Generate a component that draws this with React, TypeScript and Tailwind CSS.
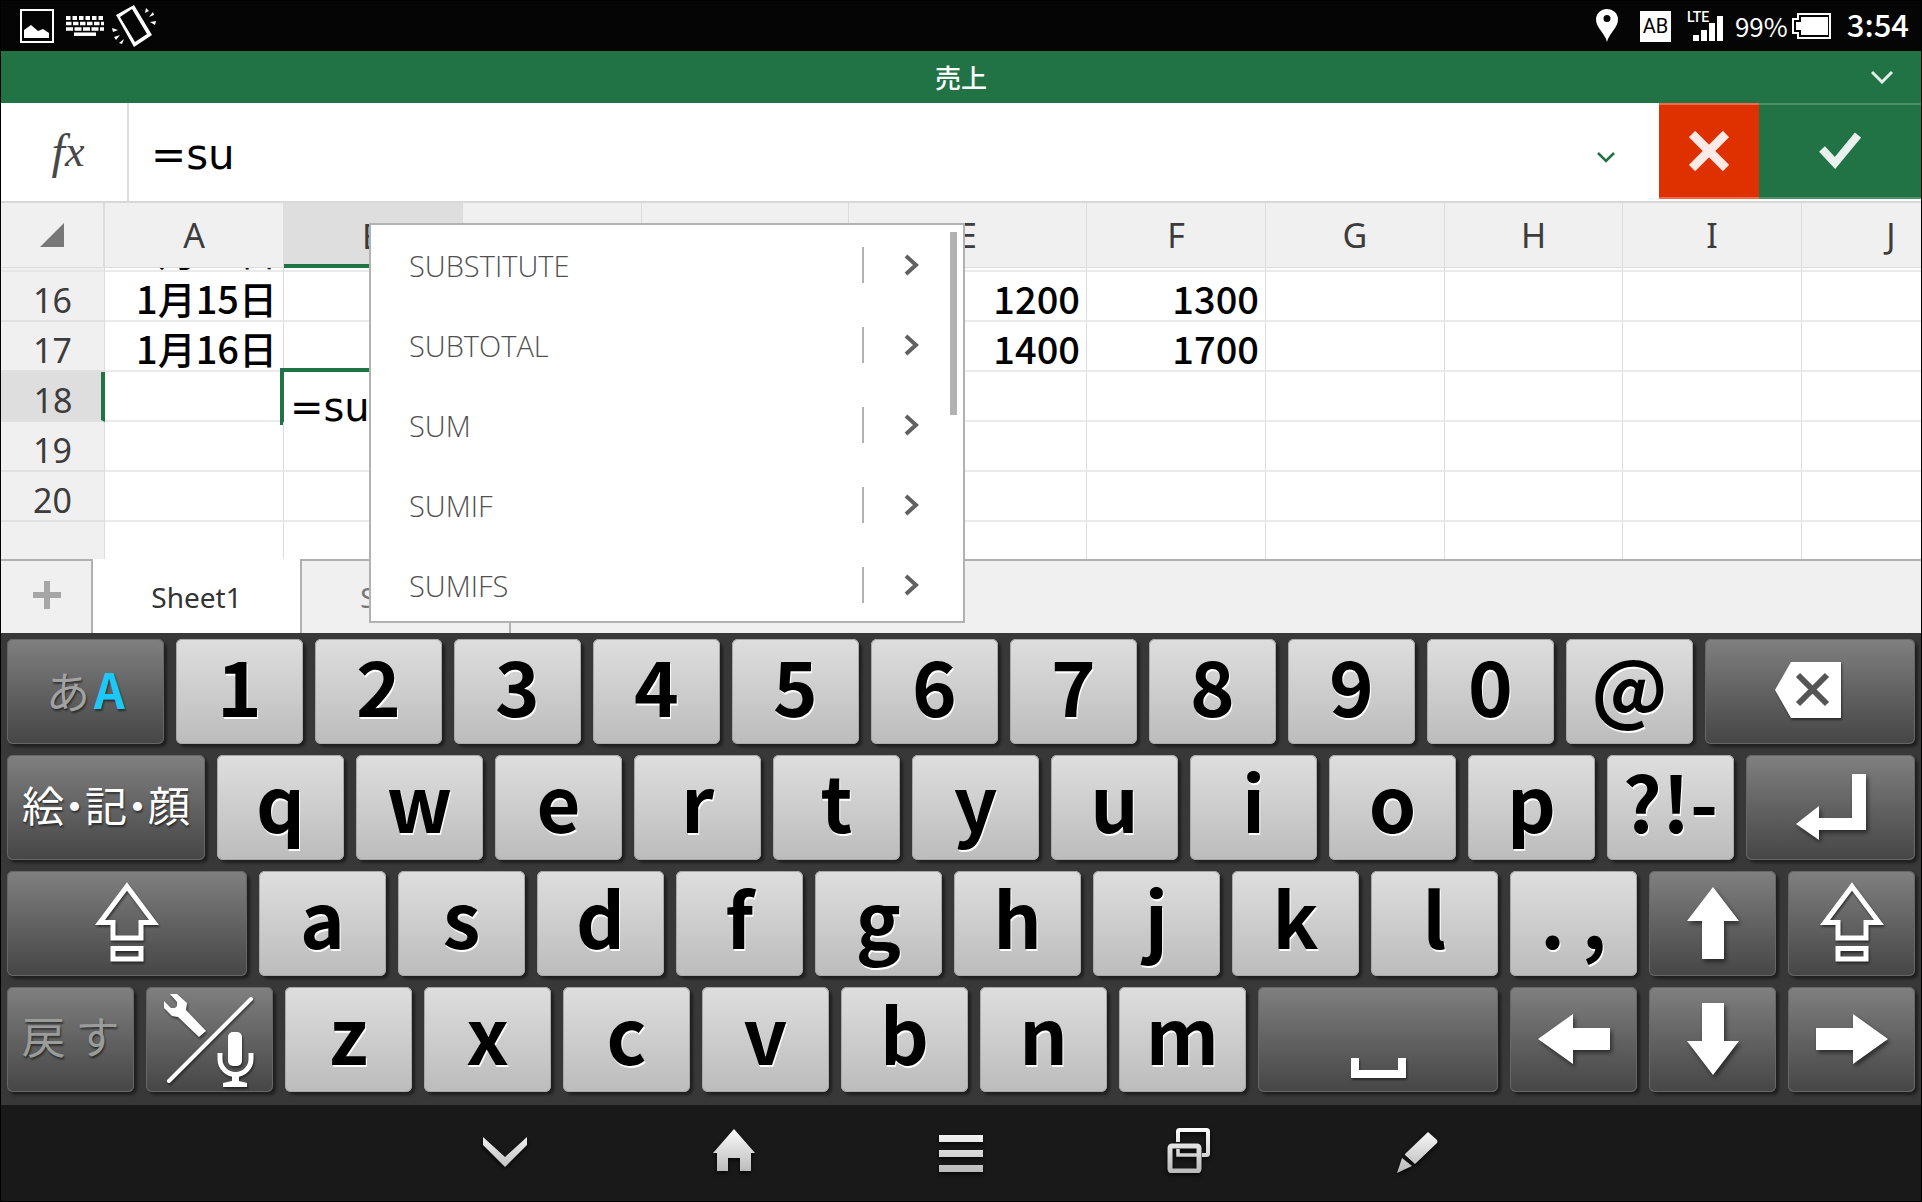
import type { ReactNode } from "react";

const columns = ["A", "B", "C", "D", "E", "F", "G", "H", "I", "J"];

const rows: { n: number; cells: Record<string, string> }[] = [
  { n: 16, cells: { A: "1月15日", E: "1200", F: "1300" } },
  { n: 17, cells: { A: "1月16日", E: "1400", F: "1700" } },
  { n: 18, cells: {} },
  { n: 19, cells: {} },
  { n: 20, cells: {} },
];

const suggestions = ["SUBSTITUTE", "SUBTOTAL", "SUM", "SUMIF", "SUMIFS"];

function StatusBar() {
  return (
    <header className="flex h-[50px] items-center justify-between bg-[#050505] pr-3 pl-[19px] font-['Noto_Sans_CJK_JP',sans-serif] text-white">
      <div className="flex items-center gap-2">
        <svg width="34" height="34" viewBox="0 0 34 34" className="mr-1">
          <rect x="1" y="1" width="32" height="32" fill="none" stroke="#fff" strokeWidth="2" />
          <path d="M4 29V21L11 16L18 22L23 20L29 24V29Z" fill="#fff" />
        </svg>
        <svg width="38" height="20" viewBox="0 0 38 20" fill="none" stroke="#fff">
          <path d="M0 2H38" strokeWidth="4" strokeDasharray="4.5 2" />
          <path d="M0 7.5H38" strokeWidth="3.5" strokeDasharray="5.5 1.5" />
          <path d="M0 13H38" strokeWidth="3.5" strokeDasharray="7 1.5" />
          <path d="M8 18.2H30" strokeWidth="3.5" />
        </svg>
        <svg width="44" height="42" viewBox="0 0 44 42" fill="#fff">
          <path fillRule="evenodd" d="M4 10L22 0L40 30L22 42ZM8 12L23 37L35 29L20 4Z" />
          <path d="M33 8L34 3L37 6ZM37 12L41 7L42 10ZM38 17L44 16L43 20ZM0 23L6 25L1 27ZM2 32L8 30L4 35ZM7 38L12 34L10 39Z" />
        </svg>
      </div>
      <div className="flex items-center">
        <svg width="22" height="34" viewBox="0 0 22 34" className="mr-[22px]">
          <path fillRule="evenodd" d="M11 33C9 24 0 19 0 10.500A11 10.500 0 0 1 22 10.500C22 19 13 24 11 33ZM11 6A3.500 3.500 0 1 0 11 13A3.500 3.500 0 1 0 11 6Z" fill="#fff" />
        </svg>
        <span className="mr-4 flex size-[31px] items-center justify-center bg-white font-['Roboto',sans-serif] text-xl text-black">AB</span>
        <span className="relative mr-3 block h-[30px] w-9">
          <span className="absolute top-0 left-0 font-['Roboto',sans-serif] text-sm leading-3 font-medium">LTE</span>
          <svg width="30" height="26" viewBox="0 0 30 26" fill="#fff" className="absolute right-0 bottom-0">
            <path d="M0 20H6V26H0ZM8 15H14V26H8ZM16 8H22V26H16ZM24 1H30V26H24Z" />
          </svg>
        </span>
        <span className="mr-1 text-[26px] leading-8">99%</span>
        <svg width="39" height="26" viewBox="0 0 39 26" className="mr-4">
          <path d="M6 1H38V25H6V20H1V6H6Z" fill="none" stroke="#fff" strokeWidth="2" />
          <path d="M9 4H36V22H9V17H4V9H9Z" fill="#fff" />
        </svg>
        <time className="pb-1 text-[31px] leading-8 font-medium">3:54</time>
      </div>
    </header>
  );
}

function TitleBar() {
  return (
    <div className="relative flex h-[52px] items-center justify-center bg-[#217346] text-white">
      <h1 className="font-['Noto_Sans_CJK_JP',sans-serif] text-[26px] leading-8 font-medium">売上</h1>
      <button type="button" aria-label="メニュー" className="absolute right-7 p-0">
        <svg width="22" height="14" viewBox="0 0 22 14" fill="none" stroke="#e6f0ea" strokeWidth="3">
          <path d="M1 2L11 12L21 2" />
        </svg>
      </button>
    </div>
  );
}

function FormulaBar() {
  return (
    <div className="flex h-[100px] border-b-2 border-[#d8d8d8] bg-white">
      <label htmlFor="formula" className="flex w-32 items-center justify-center border-r-2 border-[#dcdcdc] pl-2 font-['Liberation_Serif',serif] text-[44px] leading-none text-[#484848] italic">
        <span className="text-5xl leading-none">f</span>x
      </label>
      <input
        id="formula"
        defaultValue="=su"
        className="min-w-0 flex-1 pt-1.5 pl-[22px] font-['DejaVu_Sans',sans-serif] text-[42px] leading-[60px] text-black outline-none"
      />
      <button type="button" aria-label="展開" className="mt-2.5 w-[106px]">
        <svg width="18" height="12" viewBox="0 0 18 12" fill="none" stroke="#217346" strokeWidth="2.500" className="mx-auto">
          <path d="M1 2L9 10L17 2" />
        </svg>
      </button>
      <button type="button" aria-label="キャンセル" className="mb-0.5 flex w-[100px] items-center justify-center border-y-2 border-[#f0694c] bg-[#df3000]">
        <svg width="40" height="40" viewBox="0 0 40 40" fill="none" stroke="#fceae6" strokeWidth="9">
          <path d="M3 3L37 37M37 3L3 37" />
        </svg>
      </button>
      <button type="button" aria-label="確定" className="mb-0.5 flex w-[162px] items-center justify-center border-y-2 border-[#4d9069] bg-[#217346]">
        <svg width="42" height="38" viewBox="0 0 42 38" fill="none" stroke="#e8f1ec" strokeWidth="8">
          <path d="M3 17L16 31L39 3" />
        </svg>
      </button>
    </div>
  );
}

function Sheet() {
  return (
    <div className="h-[356px] overflow-hidden bg-white">
      <table className="w-[1980px] table-fixed border-separate border-spacing-0">
        <colgroup>
          <col className="w-[104px]" />
          <col className="w-[179px]" />
          <col className="w-[179px]" />
          <col className="w-[179px]" />
          <col className="w-[207px]" />
          <col className="w-[238px]" />
          <col className="w-[179px]" />
          <col className="w-[179px]" />
          <col className="w-[178px]" />
          <col className="w-[179px]" />
          <col className="w-[179px]" />
        </colgroup>
        <thead>
          <tr className="h-[65px] bg-[#f0f0f0] font-['Noto_Sans',sans-serif] text-[34px] leading-10 text-[#3c3c3c]">
            <th aria-label="すべて選択" className="border-r-2 border-b border-[#dcdcdc] p-0">
              <svg width="24" height="24" viewBox="0 0 24 24" className="mx-auto">
                <path d="M24 0V24H0Z" fill="#777" />
              </svg>
            </th>
            {columns.map((c) => (
              <th
                key={c}
                scope="col"
                className={
                  c === "B"
                    ? "border-r border-b-4 border-r-[#dcdcdc] border-b-[#217346] bg-[#dedede] p-0 pt-1 font-normal"
                    : "border-r border-b border-[#dcdcdc] p-0 font-normal"
                }
              >
                {c}
              </th>
            ))}
          </tr>
        </thead>
        <tbody className="font-['Noto_Sans_CJK_JP',sans-serif] text-[38px] leading-10 text-black">
          <tr className="h-1">
            <th className="border-r border-b-2 border-r-[#dcdcdc] border-b-[#e6e6e6] bg-[#f0f0f0] p-0" />
            {columns.map((c) => (
              <td key={c} className="border-r border-b-2 border-r-[#dcdcdc] border-b-[#eaeaea] p-0 pr-1.5">
                <div className="flex h-0.5 items-end justify-end overflow-hidden">{c === "A" ? "1月14日" : ""}</div>
              </td>
            ))}
          </tr>
          {rows.map((r) => (
            <tr key={r.n} className="h-[50px]">
              <th
                scope="row"
                className={
                  r.n === 18
                    ? "border-r-4 border-b-2 border-r-[#217346] border-b-[#e0e0e0] bg-[#dedede] p-0 pt-2 pl-1 font-['Noto_Sans',sans-serif] text-[34px] font-normal text-[#3c3c3c]"
                    : "border-r border-b-2 border-r-[#dcdcdc] border-b-[#e0e0e0] bg-[#f0f0f0] p-0 pt-2 font-['Noto_Sans',sans-serif] text-[34px] font-normal text-[#3c3c3c]"
                }
              >
                {r.n}
              </th>
              {columns.map((c) => (
                <td key={c} className="relative border-r border-b-2 border-r-[#dcdcdc] border-b-[#eaeaea] p-0 pt-1 pr-1.5 text-right font-medium whitespace-nowrap">
                  {r.n === 18 && c === "B" ? (
                    <input
                      aria-label="B18"
                      defaultValue="=su"
                      className="absolute -top-1 -left-1 h-[57px] w-[183px] border-t-4 border-l-4 border-[#217346] bg-white pt-4 pl-1.5 font-['DejaVu_Sans',sans-serif] text-[40px] leading-none font-normal outline-none"
                    />
                  ) : (
                    r.cells[c]
                  )}
                </td>
              ))}
            </tr>
          ))}
          <tr className="h-[37px]">
            <th className="border-r border-[#dcdcdc] bg-[#f0f0f0] p-0" />
            {columns.map((c) => (
              <td key={c} className="border-r border-[#dcdcdc] p-0" />
            ))}
          </tr>
        </tbody>
      </table>
    </div>
  );
}

function SheetTabs() {
  return (
    <nav className="flex h-[74px] bg-[#f0f0f0] font-['Noto_Sans',sans-serif] text-[28px] leading-9">
      <button type="button" aria-label="シートの追加" className="flex w-[92px] items-center justify-center border-t-2 border-r-2 border-[#b0b0b0] pb-1 pl-0.5">
        <svg width="28" height="28" viewBox="0 0 28 28" fill="none" stroke="#a6a6a6" strokeWidth="6">
          <path d="M14 0V28M0 14H28" />
        </svg>
      </button>
      <button type="button" className="w-[207px] bg-white pt-0.5 text-[#333]">Sheet1</button>
      <button type="button" className="w-[211px] border-x-2 border-t-2 border-[#b0b0b0] text-[#777]">Sheet2</button>
      <div className="flex-1 border-t-2 border-[#b0b0b0]" />
    </nav>
  );
}

function SuggestionMenu() {
  return (
    <div className="absolute top-5 left-[368px] flex h-[400px] w-[596px] overflow-hidden border-2 border-[#b2b2b2] bg-white">
      <ul className="flex-1">
        {suggestions.map((name) => (
          <li key={name} className="flex h-20 items-center">
            <button type="button" className="flex-1 pt-0.5 pl-[38px] text-left font-['Open_Sans',sans-serif] text-[29px] leading-9 font-light text-[#505050]">
              {name}
            </button>
            <button type="button" aria-label={`${name} の詳細`} className="flex h-9 w-[88px] items-center border-l-2 border-[#b2b2b2] pl-10">
              <svg width="16" height="22" viewBox="0 0 16 22" fill="none" stroke="#606060" strokeWidth="4">
                <path d="M2 2L12 11L2 20" />
              </svg>
            </button>
          </li>
        ))}
      </ul>
      <div className="mt-[7px] mr-1.5 h-[183px] w-[7px] bg-[#b2b2b2]" />
    </div>
  );
}

const light =
  "rounded-md bg-linear-to-b from-[#dedede] to-[#bcbcbc] text-[76px] leading-none font-bold text-black pb-4 [text-shadow:1px_2px_0_#fff] shadow-[3px_3px_3px_rgba(0,0,0,0.45),inset_0_0_0_1px_#a8a8a8]";
const dark =
  "rounded-md bg-linear-to-b from-[#808080] to-[#464646] text-white [text-shadow:1px_2px_2px_rgba(0,0,0,0.5)] shadow-[3px_3px_3px_rgba(0,0,0,0.45),inset_0_0_0_1px_#666]";

function Key({ children, size = "flex-[127]", tone = dark, label }: { children: ReactNode; size?: string; tone?: string; label?: string }) {
  return (
    <button
      type="button"
      aria-label={label}
      className={`flex h-[105px] min-w-0 items-center justify-center whitespace-nowrap ${size} ${tone}`}
    >
      {children}
    </button>
  );
}

function Letters({ keys }: { keys: string[] }) {
  return (
    <>
      {keys.map((k) => (
        <Key key={k} tone={light}>
          {k}
        </Key>
      ))}
    </>
  );
}

function ShiftIcon() {
  return (
    <svg width="64" height="80" viewBox="0 0 64 80" fill="none" stroke="#fff" strokeWidth="5" className="mb-1 drop-shadow-[1px_2px_1px_rgba(0,0,0,0.5)]">
      <path d="M32 4.500L59 40.500H46V56H18V40.500H5Z" />
      <path d="M18 66.500H46V77H18Z" />
    </svg>
  );
}

function ArrowIcon({ d, w, h }: { d: string; w: number; h: number }) {
  return (
    <svg width={w} height={h} viewBox={`0 0 ${w} ${h}`} fill="#fff" className="mb-0.5 drop-shadow-[2px_3px_2px_rgba(0,0,0,0.5)]">
      <path d={d} />
    </svg>
  );
}

function Keyboard() {
  return (
    <section className="flex flex-col gap-[11px] bg-[#383838] px-1.5 pt-1.5 pb-[13px] font-['Noto_Sans_CJK_JP',sans-serif]">
      <div className="flex gap-3">
        <Key size="flex-[157]">
          <span className="flex items-baseline gap-1 pb-2 leading-none">
            <span className="text-[44px] text-[#a2a2a2]">あ</span>
            <span className="text-5xl font-bold text-[#1cc8f8]">A</span>
          </span>
        </Key>
        <Letters keys={["1", "2", "3", "4", "5", "6", "7", "8", "9", "0", "@"]} />
        <Key size="flex-[210]" label="削除">
          <svg width="66" height="56" viewBox="0 0 66 56" className="mr-1 mb-1 drop-shadow-[1px_2px_1px_rgba(0,0,0,0.5)]">
            <path d="M0 28L16 0H66V56H16Z" fill="#fff" />
            <path d="M23 13L52 42M52 13L23 42" fill="none" stroke="#555" strokeWidth="6" />
          </svg>
        </Key>
      </div>
      <div className="flex gap-3">
        <Key size="flex-[198]">
          <span className="pb-2 text-[42px] leading-none [font-feature-settings:'halt']">絵・記・顔</span>
        </Key>
        <Letters keys={["q", "w", "e", "r", "t", "y", "u", "i", "o", "p", "?!-"]} />
        <Key size="flex-[169]" label="改行">
          <ArrowIcon w={70} h={66} d="M56 0H70V56H23V66L0 50L23 32V44H56Z" />
        </Key>
      </div>
      <div className="flex gap-3">
        <Key size="flex-[240]" label="Shift">
          <ShiftIcon />
        </Key>
        <Letters keys={["a", "s", "d", "f", "g", "h", "j", "k", "l", ". ,"]} />
        <Key label="上">
          <ArrowIcon w={52} h={72} d="M26 0L52 34H37V72H15V34H0Z" />
        </Key>
        <Key label="Shift">
          <ShiftIcon />
        </Key>
      </div>
      <div className="flex gap-3">
        <Key>
          <span className="pb-2.5 text-[44px] leading-none text-[#999c99]">戻 す</span>
        </Key>
        <Key label="設定・音声入力">
          <svg width="125" height="103" viewBox="1 1 125 103" className="shrink-0 drop-shadow-[1px_2px_1px_rgba(0,0,0,0.5)]">
            <path d="M24 7L31 7L41 16L40 23L60 44L53 50L32 30L26 29L18 21V14L25 21L29 21L31 19L31 15Z" fill="#fff" />
            <path d="M23 94L105 12" stroke="#fff" strokeWidth="4" strokeLinecap="round" />
            <rect x="82" y="45" width="14" height="34" rx="5" fill="#fff" />
            <path d="M74 66V72A15.500 15.500 0 0 0 105 72V66" fill="none" stroke="#fff" strokeWidth="5" />
            <path d="M86 88H93V94L101 96V100H77V96L86 94Z" fill="#fff" />
          </svg>
        </Key>
        <Letters keys={["z", "x", "c", "v", "b", "n", "m"]} />
        <Key size="flex-[240]" label="スペース">
          <svg width="55" height="20" viewBox="0 0 55 20" fill="none" stroke="#fff" strokeWidth="8" className="mt-14 drop-shadow-[1px_2px_1px_rgba(0,0,0,0.5)]">
            <path d="M4 0V16H51V0" />
          </svg>
        </Key>
        <Key label="左">
          <ArrowIcon w={72} h={50} d="M0 25L35 0V14H72V36H35V50Z" />
        </Key>
        <Key label="下">
          <ArrowIcon w={52} h={72} d="M15 0H37V38H52L26 72L0 38H15Z" />
        </Key>
        <Key label="右">
          <ArrowIcon w={72} h={50} d="M0 14H37V0L72 25L37 50V36H0Z" />
        </Key>
      </div>
    </section>
  );
}

function NavButton({ label, children }: { label: string; children: ReactNode }) {
  return (
    <button type="button" aria-label={label} className="flex h-full w-[228px] items-center justify-center pb-[6px]">
      <svg width="46" height="46" viewBox="0 0 46 46" className="drop-shadow-[0_2px_2px_rgba(0,0,0,0.8)]">
        {children}
      </svg>
    </button>
  );
}

function NavBar() {
  return (
    <nav className="flex h-24 items-center justify-center bg-[#191919]">
      <svg width="0" height="0" className="absolute">
        <defs>
          <linearGradient id="metal" x1="0" y1="0" x2="0" y2="46" gradientUnits="userSpaceOnUse">
            <stop offset="0" stopColor="#fff" />
            <stop offset="1" stopColor="#b8b8b8" />
          </linearGradient>
        </defs>
      </svg>
      <NavButton label="戻る">
        <path d="M1 10L23 30L45 10V18L23 40L1 18Z" fill="url(#metal)" />
      </NavButton>
      <NavButton label="ホーム">
        <path d="M24 2L45 26H41V44H30V31H18V44H7V26H3Z" fill="url(#metal)" />
      </NavButton>
      <NavButton label="メニュー">
        <path d="M1 8H45V15H1ZM1 23H45V30H1ZM1 38H45V45H1Z" fill="url(#metal)" />
      </NavButton>
      <NavButton label="最近のアプリ">
        <g fill="none" stroke="url(#metal)" strokeWidth="4">
          <path d="M12 15V4.500Q12 3 13.500 3H40.500Q42 3 42 4.500V26.500Q42 28 40.500 28H36" />
          <path d="M12 22V28H33V26" strokeWidth="3.500" />
          <rect x="4" y="19" width="29" height="25" rx="2" strokeWidth="5" />
        </g>
      </NavButton>
      <NavButton label="ペン">
        <path d="M34 5L43 13Q44 15 43 16L21 37L11 28V27ZM8 31L18 39L3 46Z" fill="url(#metal)" />
      </NavButton>
    </nav>
  );
}

export default function App() {
  return (
    <div className="overflow-hidden border border-black bg-black">
      <StatusBar />
      <TitleBar />
      <FormulaBar />
      <main className="relative">
        <Sheet />
        <SheetTabs />
        <SuggestionMenu />
      </main>
      <Keyboard />
      <NavBar />
    </div>
  );
}
